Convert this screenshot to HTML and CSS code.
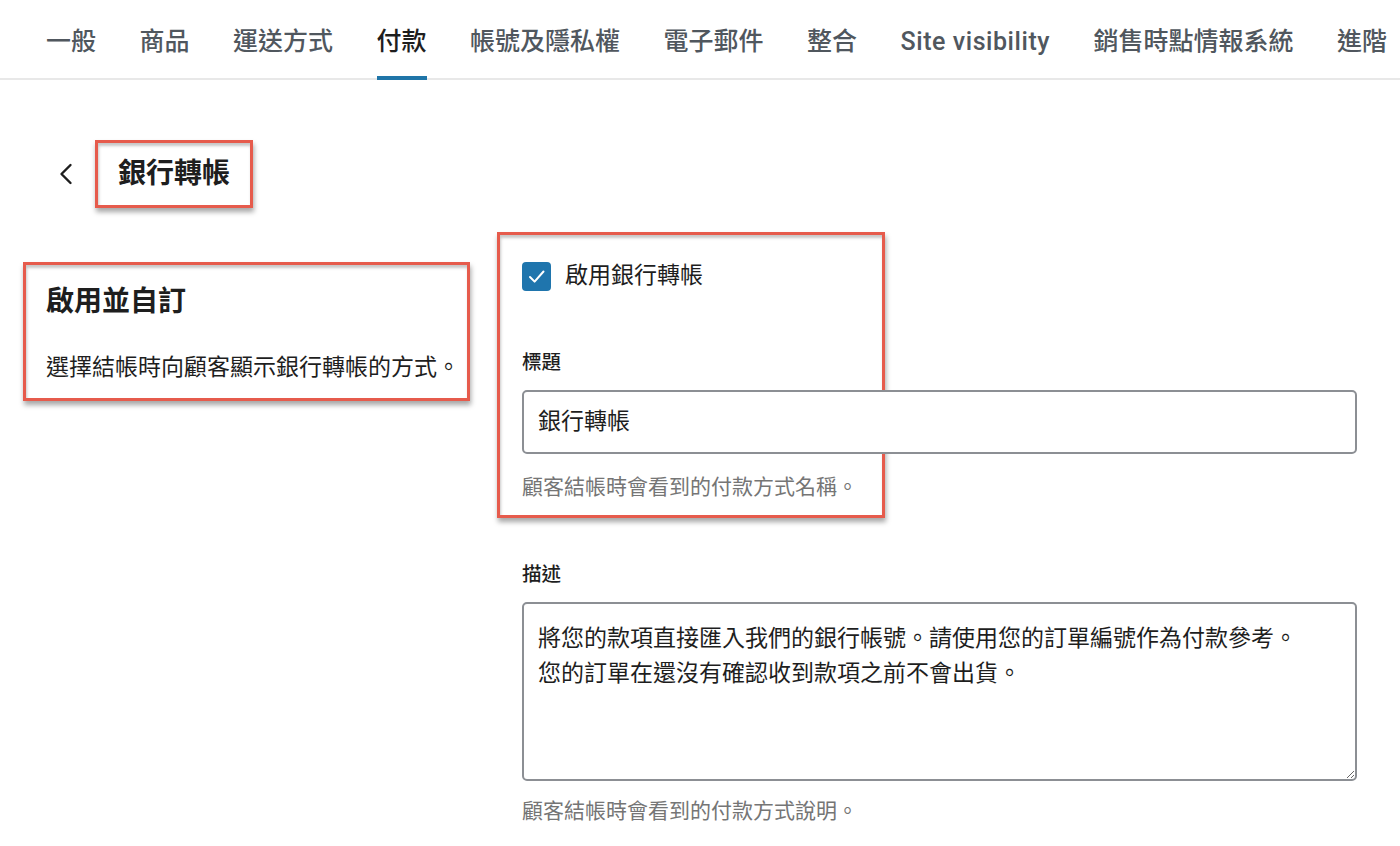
FILE: index.html
```html
<!DOCTYPE html>
<html lang="zh-Hant">
<head>
<meta charset="utf-8">
<title>付款 - 銀行轉帳</title>
<link rel="stylesheet" href="styles.css">
</head>
<body>
<nav class="tabs">
  <a class="tab">一般</a>
  <a class="tab">商品</a>
  <a class="tab">運送方式</a>
  <a class="tab active">付款</a>
  <a class="tab">帳號及隱私權</a>
  <a class="tab">電子郵件</a>
  <a class="tab">整合</a>
  <a class="tab latin">Site visibility</a>
  <a class="tab">銷售時點情報系統</a>
  <a class="tab">進階</a>
</nav>

<div class="back-row">
  <svg class="back-arrow" width="16" height="24" viewBox="0 0 16 24" aria-hidden="true">
    <path d="M12.5 3 L3.5 12 L12.5 21" fill="none" stroke="#1e1e1e" stroke-width="2.4" stroke-linecap="round" stroke-linejoin="round"/>
  </svg>
  <h1 class="page-title annot">銀行轉帳</h1>
</div>

<main class="columns">
  <section class="left-col">
    <div class="annot left-box">
      <h2 class="sec-title">啟用並自訂</h2>
      <p class="sec-desc">選擇結帳時向顧客顯示銀行轉帳的方式。</p>
    </div>
  </section>

  <section class="right-col">
    <div class="annot right-box">
      <label class="check-row">
        <span class="checkbox">
          <svg width="29" height="29" viewBox="0 0 29 29" aria-hidden="true">
            <path d="M8 15 L12.6 19.6 L21.5 9.5" fill="none" stroke="#fff" stroke-width="2" stroke-linecap="round" stroke-linejoin="round"/>
          </svg>
        </span>
        <span class="check-label">啟用銀行轉帳</span>
      </label>
      <div class="field-label title-label">標題</div>
      <div class="text-input">銀行轉帳</div>
      <p class="help title-help">顧客結帳時會看到的付款方式名稱。</p>
    </div>

    <div class="field-label desc-label">描述</div>
    <textarea class="textarea">將您的款項直接匯入我們的銀行帳號。請使用您的訂單編號作為付款參考。
您的訂單在還沒有確認收到款項之前不會出貨。</textarea>
    <p class="help desc-help">顧客結帳時會看到的付款方式說明。</p>
  </section>
</main>
</body>
</html>
```

FILE: styles.css
```css
* { box-sizing: border-box; }

html, body {
  margin: 0;
  padding: 0;
  background: #ffffff;
}

body {
  font-family: Roboto, "Noto Sans CJK TC", "Noto Sans", sans-serif;
  color: #1e1e1e;
  width: 1400px;
  height: 846px;
  overflow: hidden;
}

/* Tabs */
.tabs {
  display: flex;
  gap: 43.5px;
  padding-left: 46px;
  height: 80px;
  border-bottom: 2px solid #e8e8e8;
  white-space: nowrap;
}

.tab {
  position: relative;
  font-size: 25px;
  font-weight: 500;
  line-height: 84px;
  color: #50575e;
}

.tab.latin {
  font-weight: 500;
  letter-spacing: 0.55px;
}

.tab.active {
  color: #1e1e1e;
}

.tab.active::after {
  content: "";
  position: absolute;
  left: 0;
  right: 0;
  bottom: -2px;
  height: 4px;
  background: #1f75a8;
}

/* Annotation boxes */
.annot {
  border: 3px solid #e65b4c;
  box-shadow: 1px 4px 5px rgba(0, 0, 0, 0.35), inset 1px 3px 3px rgba(0, 0, 0, 0.22);
}

/* Back row */
.back-row {
  display: flex;
  align-items: center;
  margin-top: 60px;
  padding-left: 58px;
  gap: 21px;
}

.back-arrow { display: block; }

.page-title {
  margin: 0;
  font-size: 28px;
  font-weight: 700;
  line-height: 34px;
  padding: 14px 20px 14px 20px;
  color: #1e1e1e;
}

/* Columns */
.columns {
  display: flex;
  margin-top: 24px;
  padding-left: 23px;
}

.left-col {
  width: 474px;
  flex: none;
  padding-top: 30px;
}

.left-box {
  width: 447px;
  padding: 17px 10px 13px 20px;
}

.sec-title {
  margin: 0;
  font-size: 28px;
  font-weight: 700;
  line-height: 40px;
}

.sec-desc {
  margin: 29px 0 0;
  font-size: 23px;
  line-height: 34px;
  white-space: nowrap;
}

.right-col {
  flex: none;
  width: 860px;
}

.right-box {
  width: 388px;
  padding: 26px 0 13px 22px;
}

.check-row {
  display: flex;
  align-items: center;
  gap: 14px;
  white-space: nowrap;
}

.checkbox {
  width: 29px;
  height: 29px;
  border-radius: 4px;
  background: #1f75ad;
  display: block;
  flex: none;
}

.checkbox svg { display: block; }

.check-label {
  font-size: 23px;
  line-height: 30px;
  color: #1e1e1e;
}

.field-label {
  font-size: 19.5px;
  font-weight: 500;
  line-height: 28px;
  color: #1e1e1e;
}

.title-label { margin-top: 58px; }

.text-input {
  width: 835px;
  height: 64px;
  margin-top: 13px;
  border: 2px solid #8c8f94;
  border-radius: 5px;
  padding: 0 14px;
  font-size: 23px;
  line-height: 60px;
  color: #1e1e1e;
  background: #fff;
}

.help {
  margin: 0;
  font-size: 21px;
  line-height: 30px;
  color: #757575;
  white-space: nowrap;
}

.title-help { margin-top: 18px; }

.desc-label {
  margin-top: 43px;
  margin-left: 25px;
}

.textarea {
  display: block;
  width: 835px;
  height: 179px;
  margin: 13px 0 0 25px;
  border: 2px solid #8c8f94;
  border-radius: 5px;
  padding: 17px 14px;
  font-family: Roboto, "Noto Sans CJK TC", sans-serif;
  font-size: 23px;
  line-height: 35px;
  color: #1e1e1e;
  background: #fff;
  resize: vertical;
  overflow: hidden;
}

.desc-help {
  margin-top: 15px;
  margin-left: 25px;
}
```
